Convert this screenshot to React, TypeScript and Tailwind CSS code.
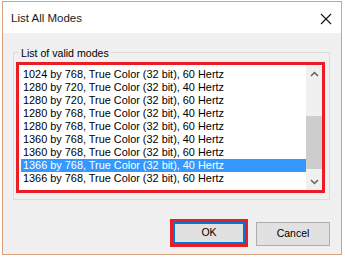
import React from "react";

const rows = [
  "1024 by 768, True Color (32 bit), 60 Hertz",
  "1280 by 720, True Color (32 bit), 40 Hertz",
  "1280 by 720, True Color (32 bit), 60 Hertz",
  "1280 by 768, True Color (32 bit), 40 Hertz",
  "1280 by 768, True Color (32 bit), 60 Hertz",
  "1360 by 768, True Color (32 bit), 40 Hertz",
  "1360 by 768, True Color (32 bit), 60 Hertz",
  "1366 by 768, True Color (32 bit), 40 Hertz",
  "1366 by 768, True Color (32 bit), 60 Hertz",
];

export default function App() {
  return (
    <div
      className="w-[345px] h-[258px] bg-white pt-[1px] pl-[2px]"
      style={{ fontFamily: '"Liberation Sans", Arial, sans-serif' }}
    >
      <div className="w-[340px] h-[254px] border border-[#d9a27c] flex flex-col bg-[#f0f0f0]">
        {/* title bar */}
        <div className="h-[31px] bg-white flex items-center justify-between pl-[8px] pr-[8px] shrink-0">
          <span className="text-[11.5px] text-[#1a1a1a] mt-[2px]">List All Modes</span>
          <svg width="12" height="12" viewBox="0 0 12 12" className="mt-[2px] mr-[1px]">
            <path d="M1 1 L11 11 M11 1 L1 11" stroke="#111" strokeWidth="1.1" fill="none" />
          </svg>
        </div>
        {/* group box */}
        <div className="relative mt-[19px] ml-[10px] w-[317px] h-[148px] border border-[#dcdcdc] pt-[9px] pl-[2px]">
          <span className="absolute left-[5px] top-[-7px] bg-[#f0f0f0] px-[2px] text-[10.6px] leading-[14px] text-black">
            List of valid modes
          </span>
          <div className="w-[309px] h-[131px] border-[3px] border-[#ec1c24] bg-white flex">
            <div className="w-[287px] pt-[3px] pl-[2px]">
              {rows.map((r, i) => (
                <div
                  key={i}
                  className={
                    "h-[13px] leading-[13px] pl-[2px] text-[10.9px] whitespace-nowrap " +
                    (i === 7 ? "bg-[#3399ff] text-white" : "text-black")
                  }
                >
                  {r}
                </div>
              ))}
            </div>
            <div className="w-[16px] bg-[#f0f0f0] flex flex-col">
              <div className="h-[17px] flex items-center justify-center">
                <svg width="9" height="6" viewBox="0 0 9 6">
                  <path d="M1 5 L4.5 1.5 L8 5" stroke="#606060" strokeWidth="1.5" fill="none" />
                </svg>
              </div>
              <div className="mt-[34px] h-[53px] bg-[#cdcdcd]" />
              <div className="flex-1" />
              <div className="h-[17px] flex items-center justify-center">
                <svg width="9" height="6" viewBox="0 0 9 6">
                  <path d="M1 1 L4.5 4.5 L8 1" stroke="#606060" strokeWidth="1.5" fill="none" />
                </svg>
              </div>
            </div>
          </div>
        </div>
        {/* buttons */}
        <div className="flex justify-end items-start pr-[11px]">
          <div className="mt-[19px] w-[78px] h-[28px] border-[3px] border-[#ec1c24]">
            <div className="w-full h-full border-2 border-[#0078d7] bg-[#e1e1e1] flex items-center justify-center text-[10.5px] text-black">
              OK
            </div>
          </div>
          <div className="mt-[22px] ml-[8px] w-[74px] h-[24px] border border-[#adadad] bg-[#e1e1e1] flex items-center justify-center text-[10.5px] text-black">
            Cancel
          </div>
        </div>
      </div>
    </div>
  );
}
